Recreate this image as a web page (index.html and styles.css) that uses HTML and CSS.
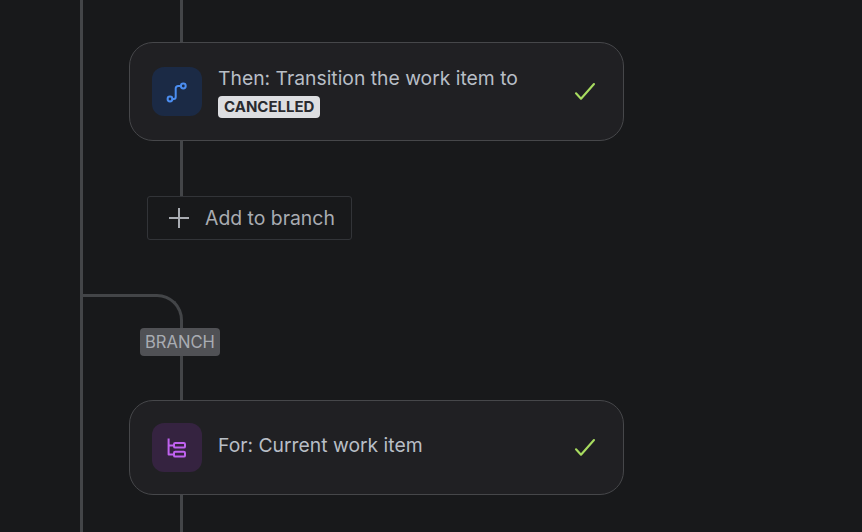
FILE: index.html
```html
<!DOCTYPE html>
<html lang="en">
<head>
<meta charset="utf-8">
<title>Rule branch</title>
<link rel="stylesheet" href="styles.css">
</head>
<body>
<main class="flow">
  <div class="trunk"></div>
  <div class="branch">
    <div class="stem stem-top"></div>
    <section class="card card-then">
      <div class="icon icon-blue">
        <svg width="24" height="24" viewBox="0 0 24 24" fill="none" stroke="#4b8df0" stroke-width="2" stroke-linecap="round">
          <circle cx="5" cy="19" r="2.4"/>
          <circle cx="18.3" cy="6" r="2.4"/>
          <path d="M7.4 19h1.4c1.1 0 1.9-.8 1.9-1.9V8.4c0-1.4 1-2.4 2.4-2.4h2.8"/>
        </svg>
      </div>
      <div class="text">
        <div>Then: Transition the work item to</div>
        <span class="lozenge">CANCELLED</span>
      </div>
      <svg class="check" width="24" height="24" viewBox="0 0 24 24" fill="none" stroke="#a8dc60" stroke-width="2.1" stroke-linecap="round" stroke-linejoin="round">
        <path d="M3 13.3 8 18.7 21 4"/>
      </svg>
    </section>
    <div class="stem stem-add"></div>
    <button class="add" type="button">
      <svg width="24" height="24" viewBox="0 0 24 24" fill="none" stroke="#a9acb2" stroke-width="2">
        <path d="M12 2v20M2 12h20"/>
      </svg>
      <span>Add to branch</span>
    </button>
    <div class="curve"></div>
    <div class="tag">BRANCH</div>
    <div class="stem stem-for"></div>
    <section class="card card-for">
      <div class="icon icon-purple">
        <svg width="24" height="24" viewBox="0 0 24 24" fill="none" stroke="#c062f0" stroke-width="2" stroke-linejoin="round">
          <path d="M3.6 2.5v16h5M3.6 9.5h5"/>
          <rect x="9" y="7" width="11" height="4.6" rx="1.2"/>
          <rect x="9" y="15.8" width="11" height="4.8" rx="1.2"/>
        </svg>
      </div>
      <div class="text">
        <div>For: Current work item</div>
      </div>
      <svg class="check" width="24" height="24" viewBox="0 0 24 24" fill="none" stroke="#a8dc60" stroke-width="2.1" stroke-linecap="round" stroke-linejoin="round">
        <path d="M3 13.3 8 18.7 21 4"/>
      </svg>
    </section>
    <div class="stem stem-end"></div>
  </div>
</main>
</body>
</html>
```

FILE: styles.css
```css
* {
  box-sizing: border-box;
}

html,
body {
  margin: 0;
  height: 100%;
  background: #18191b;
  overflow: hidden;
}

.flow {
  display: flex;
  height: 532px;
  padding-left: 80px;
  font-family: Inter, "Liberation Sans", sans-serif;
}

.trunk {
  width: 3px;
  background: #434548;
}

.branch {
  display: flex;
  flex-direction: column;
  align-items: flex-start;
}

.stem {
  width: 3px;
  margin-left: 97px;
  background: #434548;
}

.stem-top {
  height: 42px;
}

.stem-add {
  height: 55px;
}

.stem-for {
  height: 44px;
}

.stem-end {
  flex: 1;
}

.card {
  display: flex;
  align-items: flex-start;
  width: 495px;
  margin-left: 46px;
  padding: 24px 26px 0 22px;
  background: #202023;
  border: 1px solid #46474a;
  border-radius: 24px;
}

.card-then {
  height: 99px;
}

.card-for {
  height: 95px;
  padding-top: 22px;
}

.icon {
  display: flex;
  flex: none;
  align-items: center;
  justify-content: center;
  width: 50px;
  height: 49px;
  border-radius: 12px;
}

.icon-blue {
  background: #1b2a45;
}

.icon-purple {
  background: #352340;
}

.text {
  flex: 1;
  margin-left: 16px;
  font-size: 19.32px;
  line-height: 24px;
  color: #b8bec6;
}

.card-then .text {
  margin-top: -1px;
}

.card-for .text {
  padding-top: 10px;
}

.lozenge {
  display: block;
  width: fit-content;
  margin-top: 6px;
  padding: 0 6px;
  font-size: 15px;
  font-weight: 700;
  line-height: 22px;
  color: #292a2e;
  background: #dddee1;
  border-radius: 4px;
}

.check {
  flex: none;
  margin-top: 13px;
}

.add {
  display: flex;
  align-items: center;
  gap: 14px;
  width: 205px;
  height: 44px;
  margin-left: 64px;
  padding: 0 0 0 19px;
  font: 400 19.4px Inter, "Liberation Sans", sans-serif;
  color: #a9acb2;
  background: transparent;
  border: 1px solid #323438;
  border-radius: 3px;
}

.curve {
  width: 100px;
  height: 34px;
  margin-top: 54px;
  border-top: 3px solid #434548;
  border-right: 3px solid #434548;
  border-top-right-radius: 26px;
}

.tag {
  width: 80px;
  height: 28px;
  margin-left: 57px;
  font-size: 16.6px;
  line-height: 28px;
  text-align: center;
  color: #a9acb2;
  background: #505155;
  border-radius: 4px;
}
```
